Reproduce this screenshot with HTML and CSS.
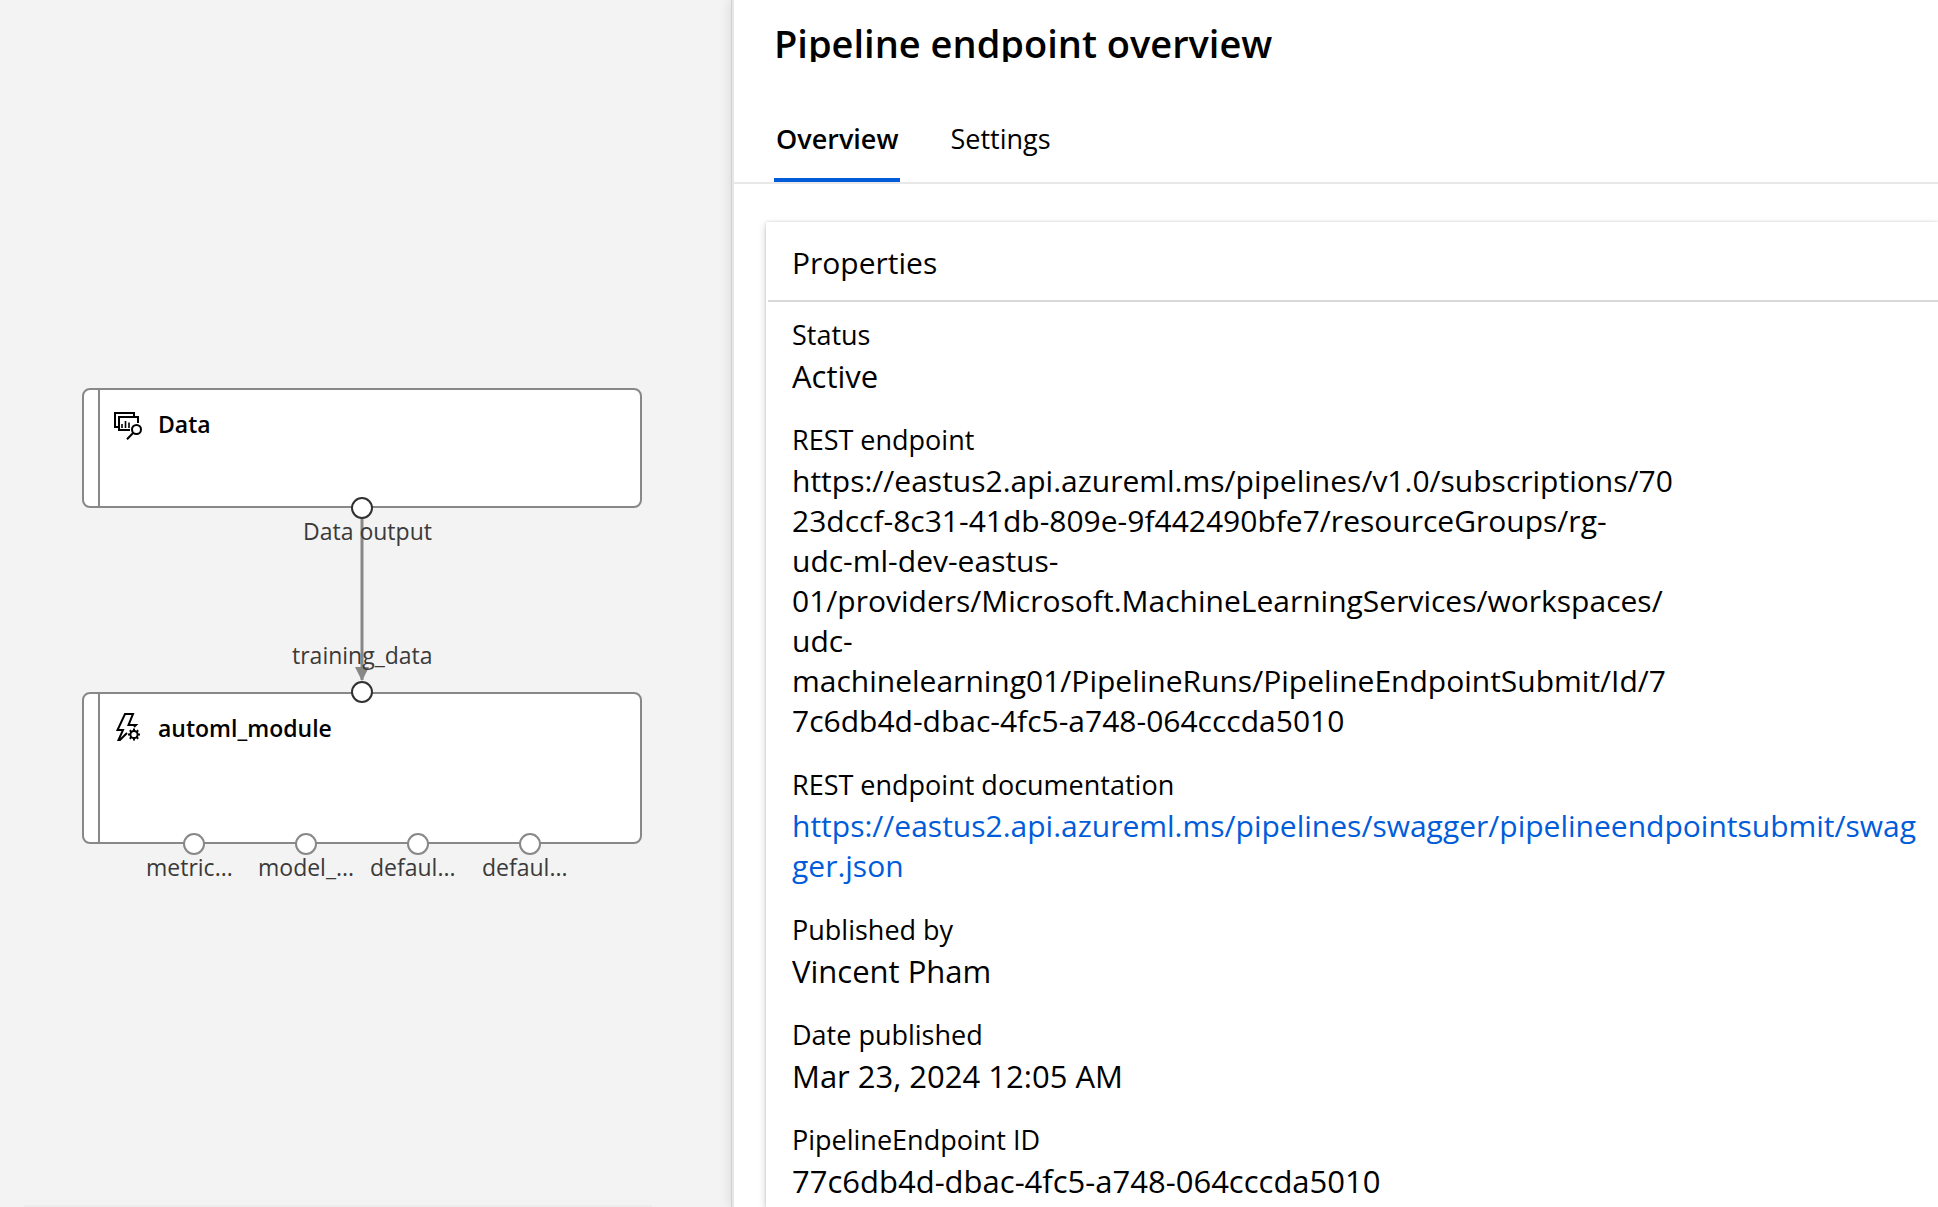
FILE: index.html
```html
<!DOCTYPE html>
<html lang="en">
<head>
  <meta charset="utf-8">
  <meta name="viewport" content="width=device-width, initial-scale=1">
  <title>Pipeline endpoint overview</title>
  <link rel="stylesheet" href="styles.css">
</head>
<body>
  <div class="app">
    <section class="canvas" aria-label="Pipeline graph">
      <svg class="edge" width="14" height="184" viewBox="0 0 14 184" aria-hidden="true">
        <path d="M7 0V172" stroke="#8a8886" stroke-width="3"/>
        <path d="M0 159H14L7 173Z" fill="#8a8886"/>
      </svg>

      <article class="node node-data">
        <div class="node-head">
          <svg class="node-icon" width="28" height="28" viewBox="0 0 28 28" fill="none" stroke="#000" stroke-width="2" aria-hidden="true">
            <path d="M4 15H1V1H20V4"/>
            <path d="M16 18H5V5H24V11"/>
            <path d="M8 16V12M11.500 16V9M15 16V10.500" stroke-width="1.600"/>
            <circle cx="22.500" cy="17.500" r="4.500"/>
            <path d="M19.300 20.700L13 27.300"/>
          </svg>
          <h2 class="node-title">Data</h2>
        </div>
        <span class="port port-linked out-center"></span>
      </article>

      <article class="node node-automl">
        <div class="node-head">
          <svg class="node-icon" width="28" height="28" viewBox="0 3 28 28" fill="none" stroke="#000" stroke-width="2" aria-hidden="true">
            <path d="M20 14L22 12H14.500L19 1H11L3.500 17H9L4.500 27H6L13 20"/>
            <circle cx="20" cy="21.500" r="3.600"/>
            <path d="M20 15.500V18M20 25V27.500M14 21.500H16.500M23.500 21.500H26M15.800 17.300L17.600 19.100M22.400 23.900L24.200 25.700M24.200 17.300L22.400 19.100M17.600 23.900L15.800 25.700"/>
          </svg>
          <h2 class="node-title">automl_module</h2>
        </div>
        <span class="port port-linked in-center"></span>
        <span class="port out-1"></span>
        <span class="port out-2"></span>
        <span class="port out-3"></span>
        <span class="port out-4"></span>
      </article>

      <span class="port-label label-output">Data output</span>
      <span class="port-label label-input">training_data</span>
      <span class="port-label label-1">metric...</span>
      <span class="port-label label-2">model_...</span>
      <span class="port-label label-3">defaul...</span>
      <span class="port-label label-4">defaul...</span>
    </section>

    <main class="panel">
      <header class="panel-head">
        <h1 class="panel-title">Pipeline endpoint overview</h1>
        <div class="tabs" role="tablist">
          <button class="tab tab-active" type="button" role="tab" aria-selected="true">Overview</button>
          <button class="tab" type="button" role="tab" aria-selected="false">Settings</button>
        </div>
      </header>

      <section class="card">
        <h2 class="card-title">Properties</h2>
        <dl class="props">
          <div class="prop">
            <dt>Status</dt>
            <dd>Active</dd>
          </div>
          <div class="prop">
            <dt>REST endpoint</dt>
            <dd class="url">https://eastus2.api.azureml.ms/pipelines/v1.0/subscriptions/70<br>23dccf-8c31-41db-809e-9f442490bfe7/resourceGroups/rg-<br>udc-ml-dev-eastus-<br>01/providers/Microsoft.MachineLearningServices/workspaces/<br>udc-<br>machinelearning01/PipelineRuns/PipelineEndpointSubmit/Id/7<br>7c6db4d-dbac-4fc5-a748-064cccda5010</dd>
          </div>
          <div class="prop">
            <dt>REST endpoint documentation</dt>
            <dd class="url"><a href="https://eastus2.api.azureml.ms/pipelines/swagger/pipelineendpointsubmit/swagger.json">https://eastus2.api.azureml.ms/pipelines/swagger/pipelineendpointsubmit/swag<br>ger.json</a></dd>
          </div>
          <div class="prop">
            <dt>Published by</dt>
            <dd>Vincent Pham</dd>
          </div>
          <div class="prop">
            <dt>Date published</dt>
            <dd>Mar 23, 2024 12:05 AM</dd>
          </div>
          <div class="prop">
            <dt>PipelineEndpoint ID</dt>
            <dd>77c6db4d-dbac-4fc5-a748-064cccda5010</dd>
          </div>
        </dl>
      </section>
    </main>
  </div>
</body>
</html>
```
FILE: styles.css
```css
* {
  box-sizing: border-box;
}

body {
  margin: 0;
  color: #000;
  background: #fff;
  font-family: "Segoe UI", "Open Sans", "Noto Sans", sans-serif;
}

h1, h2, dl, dd {
  margin: 0;
}

.app {
  display: grid;
  grid-template-columns: minmax(0, 122fr) minmax(0, 201fr);
  min-height: 100vh;
  overflow: hidden;
}

/* Graph canvas */
.canvas {
  position: relative;
  background: #f3f3f3;
}

.canvas::after {
  content: "";
  position: absolute;
  left: 24px;
  right: 80px;
  bottom: 0;
  height: 2px;
  background: #ededed;
}

.node {
  position: absolute;
  left: 82px;
  width: 560px;
  padding: 22px 30px;
  background: linear-gradient(to right, #fff 14px, #8a8886 14px, #8a8886 16px, #fff 16px);
  border: 2px solid #8a8886;
  border-radius: 8px;
}

.node-data {
  top: 388px;
  height: 120px;
}

.node-automl {
  top: 692px;
  height: 152px;
}

.node-head {
  display: flex;
  gap: 16px;
}

.node-icon {
  flex: none;
  overflow: visible;
}

.node-title {
  font-size: 23px;
  font-weight: 600;
  line-height: 24px;
}

.edge {
  position: absolute;
  left: 355px;
  top: 508px;
}

.port {
  position: absolute;
  width: 22px;
  height: 22px;
  background: #fff;
  border: 2px solid #8a8886;
  border-radius: 50%;
}

.port-linked {
  border-color: #323130;
}

.out-center { left: 267px; bottom: -13px; }
.in-center { left: 267px; top: -13px; }
.out-1 { left: 99px; bottom: -13px; }
.out-2 { left: 211px; bottom: -13px; }
.out-3 { left: 323px; bottom: -13px; }
.out-4 { left: 435px; bottom: -13px; }

.port-label {
  position: absolute;
  color: #3b3a39;
  font-size: 23px;
  line-height: 32px;
  white-space: nowrap;
}

.label-output { left: 303px; top: 515px; }
.label-input { left: 292px; top: 639px; }
.label-1 { left: 146px; top: 851px; }
.label-2 { left: 258px; top: 851px; }
.label-3 { left: 370px; top: 851px; }
.label-4 { left: 482px; top: 851px; }

/* Details panel */
.panel {
  position: relative;
  display: flex;
  flex-direction: column;
  background: #fff;
  border-left: 2px solid #e6e6e6;
  box-shadow: 0 0 0 1px #d2d2d2, 0 0 12px rgba(0, 0, 0, 0.14);
}

.panel-head {
  padding: 24px 40px 0;
  border-bottom: 2px solid #e8e8e8;
}

.panel-title {
  font-size: 38px;
  font-weight: 600;
  line-height: 38px;
  overflow: hidden;
  white-space: nowrap;
}

.tabs {
  display: flex;
  gap: 48px;
  margin-top: 57px;
}

.tab {
  padding: 0 2px 19px;
  color: #000;
  font-family: inherit;
  font-size: 27px;
  line-height: 40px;
  background: none;
  border: 0;
  border-bottom: 4px solid transparent;
  cursor: pointer;
}

.tab-active {
  font-weight: 600;
  border-bottom-color: #015cda;
}

.card {
  flex: 1;
  margin: 38px 0 0 32px;
  padding-left: 2px;
  background: #fff;
  box-shadow: 0 3px 8px rgba(0, 0, 0, 0.2), 0 0 2px rgba(0, 0, 0, 0.16);
}

.card-title {
  padding: 21px 24px 17px;
  font-size: 30px;
  font-weight: 400;
  line-height: 40px;
  border-bottom: 2px solid #d8d8d8;
}

.props {
  display: grid;
  gap: 24px;
  padding: 13px 0 0 24px;
}

.prop {
  display: grid;
  gap: 1px;
}

.prop dt {
  font-size: 27px;
  line-height: 40px;
}

.prop dd {
  font-size: 31px;
  line-height: 40px;
  white-space: nowrap;
}

.prop .url {
  font-size: 30px;
}

.prop a {
  color: #015cda;
  text-decoration: none;
}
```
